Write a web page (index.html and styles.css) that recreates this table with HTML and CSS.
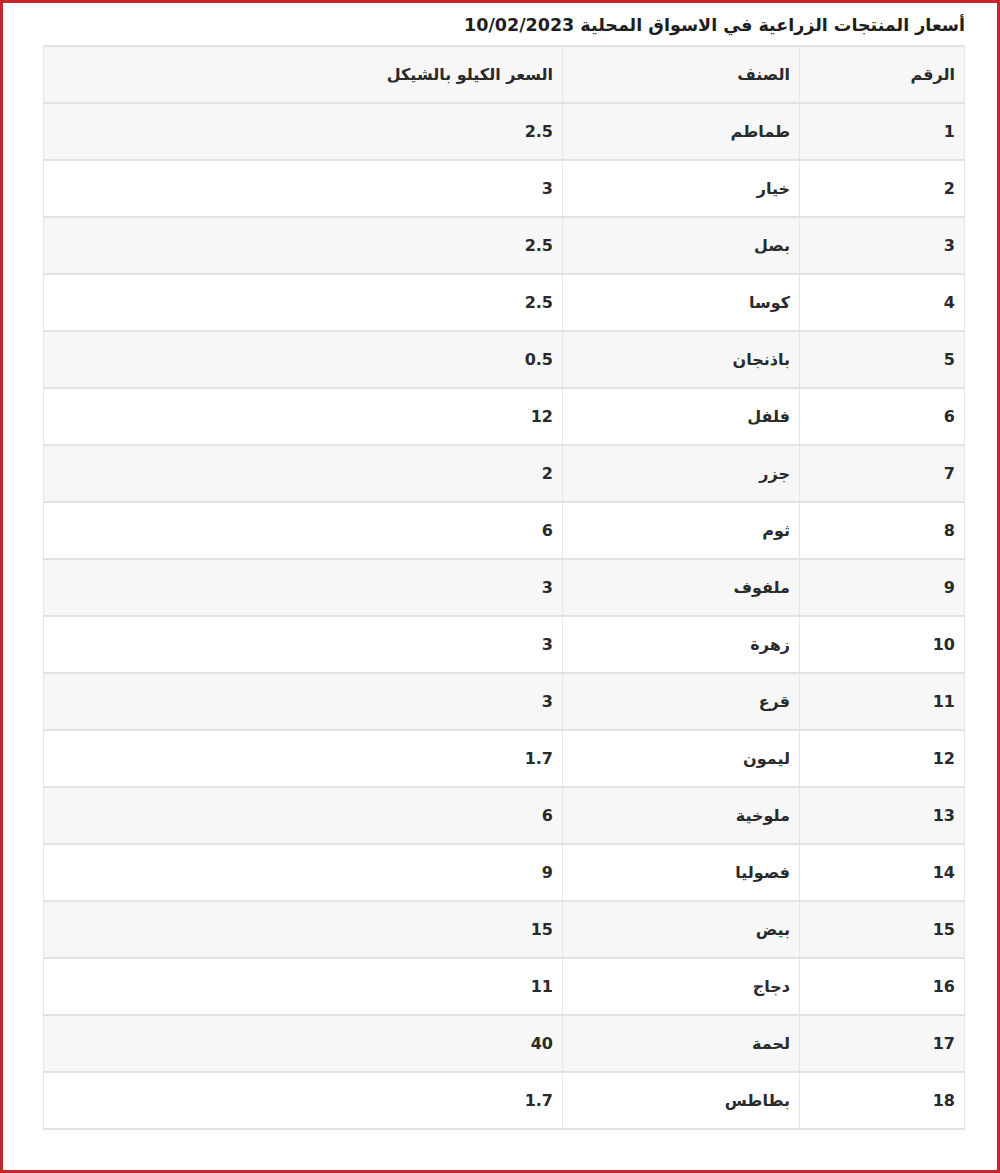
FILE: index.html
```html
<!DOCTYPE html>
<html lang="ar" dir="rtl">
<head>
<meta charset="utf-8">
<link rel="stylesheet" href="styles.css">
</head>
<body>
<div class="frame">
  <h2 class="title">أسعار المنتجات الزراعية في الاسواق المحلية 10/02/2023</h2>
  <table class="prices">
    <thead>
      <tr><th class="c-num">الرقم</th><th class="c-item">الصنف</th><th class="c-price">السعر الكيلو بالشيكل</th></tr>
    </thead>
    <tbody>
      <tr><td>1</td><td>طماطم</td><td>2.5</td></tr>
      <tr><td>2</td><td>خيار</td><td>3</td></tr>
      <tr><td>3</td><td>بصل</td><td>2.5</td></tr>
      <tr><td>4</td><td>كوسا</td><td>2.5</td></tr>
      <tr><td>5</td><td>باذنجان</td><td>0.5</td></tr>
      <tr><td>6</td><td>فلفل</td><td>12</td></tr>
      <tr><td>7</td><td>جزر</td><td>2</td></tr>
      <tr><td>8</td><td>ثوم</td><td>6</td></tr>
      <tr><td>9</td><td>ملفوف</td><td>3</td></tr>
      <tr><td>10</td><td>زهرة</td><td>3</td></tr>
      <tr><td>11</td><td>قرع</td><td>3</td></tr>
      <tr><td>12</td><td>ليمون</td><td>1.7</td></tr>
      <tr><td>13</td><td>ملوخية</td><td>6</td></tr>
      <tr><td>14</td><td>فصوليا</td><td>9</td></tr>
      <tr><td>15</td><td>بيض</td><td>15</td></tr>
      <tr><td>16</td><td>دجاج</td><td>11</td></tr>
      <tr><td>17</td><td>لحمة</td><td>40</td></tr>
      <tr><td>18</td><td>بطاطس</td><td>1.7</td></tr>
    </tbody>
  </table>
</div>
</body>
</html>
```

FILE: styles.css
```css
html, body {
  margin: 0;
  padding: 0;
  background: #ffffff;
}
.frame {
  box-sizing: border-box;
  width: 1000px;
  height: 1173px;
  border: 3px solid #c5262b;
  padding: 12px 32px 0 40px;
  font-family: "DejaVu Sans", "Noto Sans", sans-serif;
  color: #2a2a2a;
}
.title {
  margin: 0 0 9px 0;
  font-size: 17.5px;
  line-height: 21px;
  font-weight: bold;
  color: #1e1e1e;
  text-align: right;
}
.prices {
  width: 922px;
  border-collapse: collapse;
  table-layout: fixed;
}
.prices th, .prices td {
  height: 55px;
  padding: 0 9px;
  text-align: right;
  font-size: 16px;
  font-weight: bold;
  color: #2a2a2a;
  border-top: 2px solid #e2e2e2;
  border-bottom: 2px solid #e2e2e2;
  border-left: 1px solid #e6e6e6;
  border-right: 1px solid #e6e6e6;
  vertical-align: middle;
}
.c-num { width: 146px; }
.c-item { width: 218px; }
.c-price { width: auto; }
.prices thead tr,
.prices tbody tr:nth-child(odd) {
  background: #f7f7f7;
}
.prices tbody tr:nth-child(even) {
  background: #ffffff;
}
```
